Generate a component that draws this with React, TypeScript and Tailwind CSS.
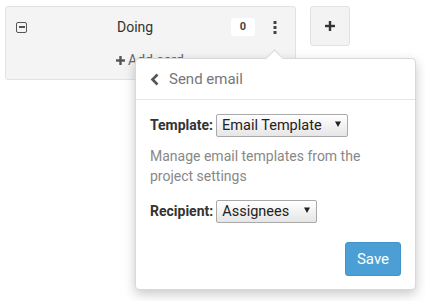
import React from "react";

const font = { fontFamily: "Roboto, 'Noto Sans', sans-serif" };

function Kebab() {
  return (
    <svg width="4" height="13" viewBox="0 0 4 13" className="text-[#444]">
      <rect x="0.5" y="0" width="3" height="3" fill="currentColor" />
      <rect x="0.5" y="5" width="3" height="3" fill="currentColor" />
      <rect x="0.5" y="10" width="3" height="3" fill="currentColor" />
    </svg>
  );
}

function FakeSelect({ value, width }: { value: string; width: string }) {
  return (
    <div
      className={`relative h-[23px] ${width} rounded-[2px] border border-[#a9a9a9] bg-gradient-to-b from-white to-[#e6e6e6] pl-[5px] text-[14.5px] leading-[21px] text-[#222]`}
    >
      {value}
      <svg
        width="6"
        height="6"
        viewBox="0 0 6 6"
        className="absolute right-[6px] top-[6px]"
      >
        <path d="M0 0.5 H6 L3 6 Z" fill="#222" />
      </svg>
    </div>
  );
}

export default function App() {
  return (
    <div className="relative h-[301px] w-[425px] overflow-hidden bg-white" style={font}>
      <div className="flex items-start gap-[14px] pl-[5px] pt-[6px]">
        {/* column */}
        <div className="flex h-[74px] w-[291px] flex-col rounded-[3px] border border-[#e2e2e2] bg-[#f4f4f4]">
          <div className="flex h-[40px] items-center">
            <div className="ml-[10px] flex h-[11px] w-[11px] items-center justify-center rounded-[2px] border-[1.5px] border-[#555]">
              <div className="h-[1.5px] w-[6px] bg-[#555]" />
            </div>
            <div className="ml-[90px] text-[14px] text-[#333]">Doing</div>
            <div className="flex-1" />
            <div className="flex h-[18px] w-[24px] items-center justify-center rounded-[3px] bg-white text-[11px] font-bold text-[#444]">
              0
            </div>
            <div className="ml-[18px] mr-[18px] flex items-center">
              <Kebab />
            </div>
          </div>
          <div className="ml-[110px] flex items-center gap-[3px] pt-[3px] text-[14px] text-[#666]">
            <svg width="9" height="9" viewBox="0 0 9 9">
              <rect x="3.3" y="0" width="2.4" height="9" fill="#555" />
              <rect x="0" y="3.3" width="9" height="2.4" fill="#555" />
            </svg>
            <span>Add card</span>
          </div>
        </div>
        {/* add column */}
        <div className="flex h-[40px] w-[40px] items-center justify-center rounded-[3px] border border-[#e2e2e2] bg-[#f3f3f3]">
          <svg width="10" height="10" viewBox="0 0 10 10">
            <rect x="3.8" y="0" width="2.4" height="10" fill="#333" />
            <rect x="0" y="3.8" width="10" height="2.4" fill="#333" />
          </svg>
        </div>
      </div>

      {/* popover */}
      <div className="absolute left-[135px] top-[58px] w-[281px] rounded-[4px] border border-[#d8d8d8] bg-white shadow-[0_4px_12px_rgba(0,0,0,0.22)]">
        <div className="absolute -top-[7px] left-[132px] h-[13px] w-[13px] rotate-45 border-l border-t border-[#d8d8d8] bg-white" />
        <div className="relative flex h-[41px] items-center border-b border-[#e6e6e6] pl-[14px] text-[15px] text-[#777]">
          <svg width="10" height="13" viewBox="0 0 10 13" className="mr-[9px]">
            <path d="M7.5 1.5 L2.5 6.5 L7.5 11.5" fill="none" stroke="#555" strokeWidth="2.6" />
          </svg>
          Send email
        </div>
        <div className="px-[14px] pb-[13px] pt-[14px]">
          <div className="flex items-center gap-[3px]">
            <span className="text-[14px] font-bold text-[#333]">Template:</span>
            <FakeSelect value="Email Template" width="w-[132px]" />
          </div>
          <p className="mt-[9px] text-[14px] leading-[20px] text-[#888]">
            Manage email templates from the
            <br />
            project settings
          </p>
          <div className="mt-[14px] flex items-center gap-[3px]">
            <span className="text-[14px] font-bold text-[#333]">Recipient:</span>
            <FakeSelect value="Assignees" width="w-[101px]" />
          </div>
          <div className="mt-[19px] flex justify-end">
            <button className="h-[34px] w-[56px] rounded-[3px] border border-[#4294cc] bg-[#4b9fd5] text-[15px] text-white">
              Save
            </button>
          </div>
        </div>
      </div>
    </div>
  );
}
